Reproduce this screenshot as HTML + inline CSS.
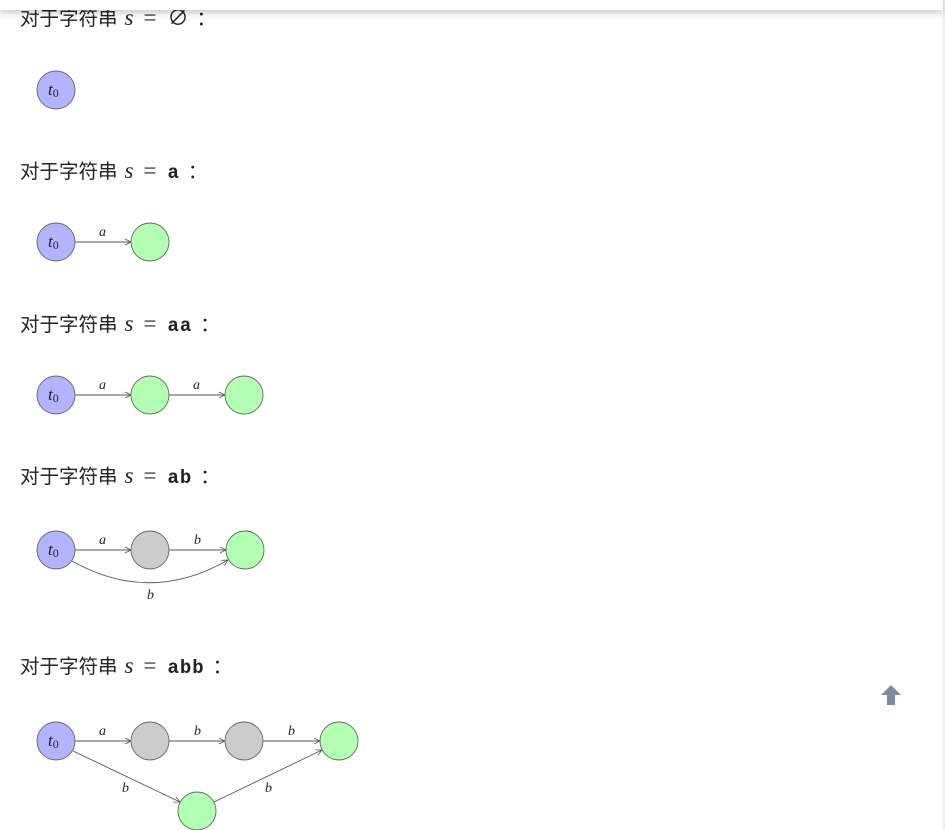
<!DOCTYPE html>
<html><head><meta charset="utf-8"><style>
html,body{margin:0;padding:0;background:#fff;width:945px;height:830px;overflow:hidden;position:relative}
.top{position:absolute;left:0;top:0;width:943px;height:10px;background:#fff;box-shadow:0 2px 8px rgba(0,0,0,.25);z-index:2}
.sb{position:absolute;right:0;top:0;width:2px;height:830px;background:#eee}
.h{position:absolute;left:20px;font:19.5px "Liberation Sans","Noto Sans CJK SC",sans-serif;color:#222;line-height:24px;white-space:nowrap}
.m{font-family:"Liberation Serif",serif;font-style:italic;font-size:23px;margin-left:7px}
.e{font-family:"Liberation Serif",serif;font-size:23px;margin:0 11px 0 10px}
.tt{font-family:"Liberation Mono",monospace;font-weight:bold;font-size:19px;letter-spacing:1px}
.c{margin-left:8px}
svg{position:absolute;left:0;top:0}
</style></head><body>
<div class="top"></div><div class="sb"></div>
<div class="h" style="top:6px">对于字符串<span class="m">s</span><span class="e">=</span><span style="font-size:21px">∅</span><span class="c">：</span></div>
<div class="h" style="top:159px">对于字符串<span class="m">s</span><span class="e">=</span><span class="tt">a</span><span class="c">：</span></div>
<div class="h" style="top:312px">对于字符串<span class="m">s</span><span class="e">=</span><span class="tt">aa</span><span class="c">：</span></div>
<div class="h" style="top:464px">对于字符串<span class="m">s</span><span class="e">=</span><span class="tt">ab</span><span class="c">：</span></div>
<div class="h" style="top:654px">对于字符串<span class="m">s</span><span class="e">=</span><span class="tt">abb</span><span class="c">：</span></div>
<svg width="945" height="830" font-family="Liberation Serif,serif" font-style="italic" font-size="13">
<defs><marker id="ar" markerWidth="8" markerHeight="8" refX="7" refY="4" orient="auto" markerUnits="userSpaceOnUse"><path d="M1,1 L7,4 L1,7" fill="none" stroke="#555" stroke-width="0.8"/></marker></defs>
<g stroke="#555" stroke-width="0.9" fill="none" marker-end="url(#ar)">
<line x1="75" y1="242" x2="131" y2="242"/>
<line x1="75" y1="395" x2="131" y2="395"/><line x1="169" y1="395" x2="225" y2="395"/>
<line x1="75" y1="550" x2="131" y2="550"/><line x1="169" y1="550" x2="226" y2="550"/>
<path d="M72,561 Q150,605 228,560"/>
<line x1="75" y1="741" x2="131" y2="741"/><line x1="169" y1="741" x2="225" y2="741"/><line x1="263" y1="741" x2="320" y2="741"/>
<line x1="73" y1="751" x2="180" y2="802"/><line x1="214" y1="802" x2="322" y2="750"/>
</g>
<g stroke="#666" stroke-width="0.9">
<circle cx="56" cy="90" r="19" fill="#b3b3ff"/>
<circle cx="56" cy="242" r="19" fill="#b3b3ff"/><circle cx="150" cy="242" r="19" fill="#b3ffb3"/>
<circle cx="56" cy="395" r="19" fill="#b3b3ff"/><circle cx="150" cy="395" r="19" fill="#b3ffb3"/><circle cx="244" cy="395" r="19" fill="#b3ffb3"/>
<circle cx="56" cy="550" r="19" fill="#b3b3ff"/><circle cx="150" cy="550" r="19" fill="#ccc"/><circle cx="245" cy="550" r="19" fill="#b3ffb3"/>
<circle cx="56" cy="741" r="19" fill="#b3b3ff"/><circle cx="150" cy="741" r="19" fill="#ccc"/><circle cx="244" cy="741" r="19" fill="#ccc"/><circle cx="339" cy="741" r="19" fill="#b3ffb3"/>
<circle cx="197" cy="811" r="19" fill="#b3ffb3"/>
</g>
<g fill="#222" font-size="17">
<text x="48" y="95">t<tspan font-style="normal" font-size="12" dy="2">0</tspan></text>
<text x="48" y="247">t<tspan font-style="normal" font-size="12" dy="2">0</tspan></text>
<text x="48" y="400">t<tspan font-style="normal" font-size="12" dy="2">0</tspan></text>
<text x="48" y="555">t<tspan font-style="normal" font-size="12" dy="2">0</tspan></text>
<text x="48" y="746">t<tspan font-style="normal" font-size="12" dy="2">0</tspan></text>
</g>
<g fill="#222" font-size="14">
<text x="99" y="236">a</text>
<text x="99" y="389">a</text><text x="193" y="389">a</text>
<text x="99" y="544">a</text><text x="194" y="544">b</text><text x="147" y="599">b</text>
<text x="99" y="735">a</text><text x="194" y="735">b</text><text x="288" y="735">b</text>
<text x="122" y="792">b</text><text x="265" y="792">b</text>
</g>
<path d="M891,685 L901,695 L895,695 L895,705 L887,705 L887,695 L881,695 Z" fill="#7f8aa3"/>
</svg>
</body></html>
